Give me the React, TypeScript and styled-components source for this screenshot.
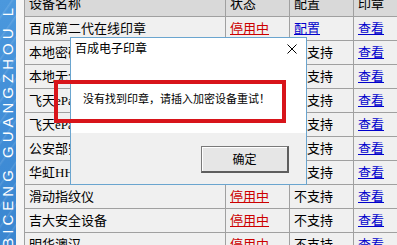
import React from "react";
import styled, { createGlobalStyle } from "styled-components";

const GlobalStyle = createGlobalStyle`
  html, body {
    margin: 0;
    padding: 0;
    overflow: hidden;
    background: #f4f4f4;
  }
  body {
    font-family: "Liberation Serif", "Noto Sans CJK SC", serif;
    color: #000;
  }
`;

const Page = styled.div`
  position: relative;
  display: flex;
  width: 397px;
  height: 245px;
  overflow: hidden;
`;

const Banner = styled.div`
  flex: 0 0 16px;
  display: flex;
  align-items: flex-end;
  justify-content: center;
  overflow: hidden;
  background:
    repeating-linear-gradient(
      125deg,
      rgba(255, 255, 255, 0) 0px,
      rgba(255, 255, 255, 0) 9px,
      rgba(255, 255, 255, 0.12) 10px,
      rgba(255, 255, 255, 0) 12px
    ),
    linear-gradient(180deg, #4b98dd 0%, #3f8cd6 60%, #3a86d0 100%);
`;

const BannerText = styled.span`
  writing-mode: vertical-rl;
  transform: rotate(180deg);
  white-space: nowrap;
  font-family: "Liberation Sans", sans-serif;
  font-size: 15px;
  letter-spacing: 4px;
  line-height: 16px;
  color: #fff;
  margin-bottom: -3px;
`;

const Gutter = styled.div`
  flex: 0 0 8px;
  background: #f5f5f5;
`;

const Table = styled.div`
  flex: 1;
  display: flex;
  flex-direction: column;
  border-left: 1px solid #a0a0a0;
  background: #f0f0f0;
`;

const Row = styled.div<{ $header?: boolean }>`
  flex: 0 0 auto;
  display: grid;
  grid-template-columns: 201px 64px 64px 64px;
  height: ${(p) => (p.$header ? 17 : 24)}px;
  box-sizing: border-box;
  border-bottom: 1px solid #a0a0a0;
  background: ${(p) => (p.$header ? "#d9d9d9" : "#f0f0f0")};
`;

const Cell = styled.div<{ $header?: boolean }>`
  display: flex;
  align-items: ${(p) => (p.$header ? "flex-end" : "center")};
  padding: ${(p) => (p.$header ? "0 0 6px 4px" : "0 0 0 4px")};
  border-right: 1px solid #a0a0a0;
  overflow: hidden;
  white-space: nowrap;
  font-size: 13px;
  line-height: 13px;
`;

const Status = styled.span`
  color: #cc0000;
  text-decoration: underline;
`;

const Link = styled.span`
  color: #0000cc;
  text-decoration: underline;
`;

const Dialog = styled.div`
  position: absolute;
  left: 70px;
  top: 37px;
  width: 237px;
  height: 148px;
  box-sizing: border-box;
  border: 1px solid #6aa5cf;
  background: #fff;
  display: flex;
  flex-direction: column;
`;

const TitleBar = styled.div`
  flex: 0 0 22px;
  display: flex;
  align-items: center;
  justify-content: space-between;
  padding: 0 9px 0 4px;
  font-size: 12px;
  line-height: 12px;
`;

const CloseButton = styled.svg`
  display: block;
  width: 10px;
  height: 10px;
`;

const Body = styled.div`
  flex: 1;
  padding: 33px 0 0 12px;
  font-size: 11px;
  line-height: 12px;
  white-space: nowrap;
`;

const Footer = styled.div`
  flex: 0 0 51px;
  display: flex;
  justify-content: flex-end;
  align-items: flex-start;
  padding: 13px 17px 0 0;
  box-sizing: border-box;
  background: #f0f0f0;
`;

const Button = styled.button`
  width: 88px;
  height: 27px;
  box-sizing: border-box;
  padding: 0;
  background: #e6e6e6;
  border: 1px solid #7a7a7a;
  border-right: 2px solid #5e5e5e;
  border-bottom: 2px solid #5e5e5e;
  box-shadow: inset 1px 1px #ffffff;
  font-family: "Liberation Serif", "Noto Sans CJK SC", serif;
  font-size: 12px;
  color: #000;
`;

const Highlight = styled.div`
  position: absolute;
  left: 54px;
  top: 80px;
  width: 232px;
  height: 43px;
  box-sizing: border-box;
  border: 4px solid #d8141a;
  pointer-events: none;
`;

type Device = {
  name: string;
  status: string;
  config: string;
  configLink?: boolean;
};

const devices: Device[] = [
  { name: "百成第二代在线印章", status: "停用中", config: "配置", configLink: true },
  { name: "本地密码印章", status: "停用中", config: "不支持" },
  { name: "本地无介质印章", status: "停用中", config: "不支持" },
  { name: "飞天ePass1000", status: "停用中", config: "不支持" },
  { name: "飞天ePass3000", status: "停用中", config: "不支持" },
  { name: "公安部安全设备", status: "停用中", config: "不支持" },
  { name: "华虹HH印章", status: "停用中", config: "不支持" },
  { name: "滑动指纹仪", status: "停用中", config: "不支持" },
  { name: "吉大安全设备", status: "停用中", config: "不支持" },
  { name: "明华澳汉", status: "停用中", config: "不支持" },
];

export default function App() {
  return (
    <>
      <GlobalStyle />
      <Page>
        <Banner>
          <BannerText>BICENG GUANGZHOU L</BannerText>
        </Banner>
        <Gutter />
        <Table>
          <Row $header>
            <Cell $header>设备名称</Cell>
            <Cell $header>状态</Cell>
            <Cell $header>配置</Cell>
            <Cell $header>印章</Cell>
          </Row>
          {devices.map((d) => (
            <Row key={d.name}>
              <Cell>{d.name}</Cell>
              <Cell>
                <Status>{d.status}</Status>
              </Cell>
              <Cell>{d.configLink ? <Link>{d.config}</Link> : d.config}</Cell>
              <Cell>
                <Link>查看</Link>
              </Cell>
            </Row>
          ))}
        </Table>

        <Dialog>
          <TitleBar>
            <span>百成电子印章</span>
            <CloseButton viewBox="0 0 10 10">
              <path d="M0.5 0.5 L9.5 9.5 M9.5 0.5 L0.5 9.5" stroke="#000" strokeWidth="1" fill="none" />
            </CloseButton>
          </TitleBar>
          <Body>没有找到印章，请插入加密设备重试！</Body>
          <Footer>
            <Button>确定</Button>
          </Footer>
        </Dialog>
        <Highlight />
      </Page>
    </>
  );
}
